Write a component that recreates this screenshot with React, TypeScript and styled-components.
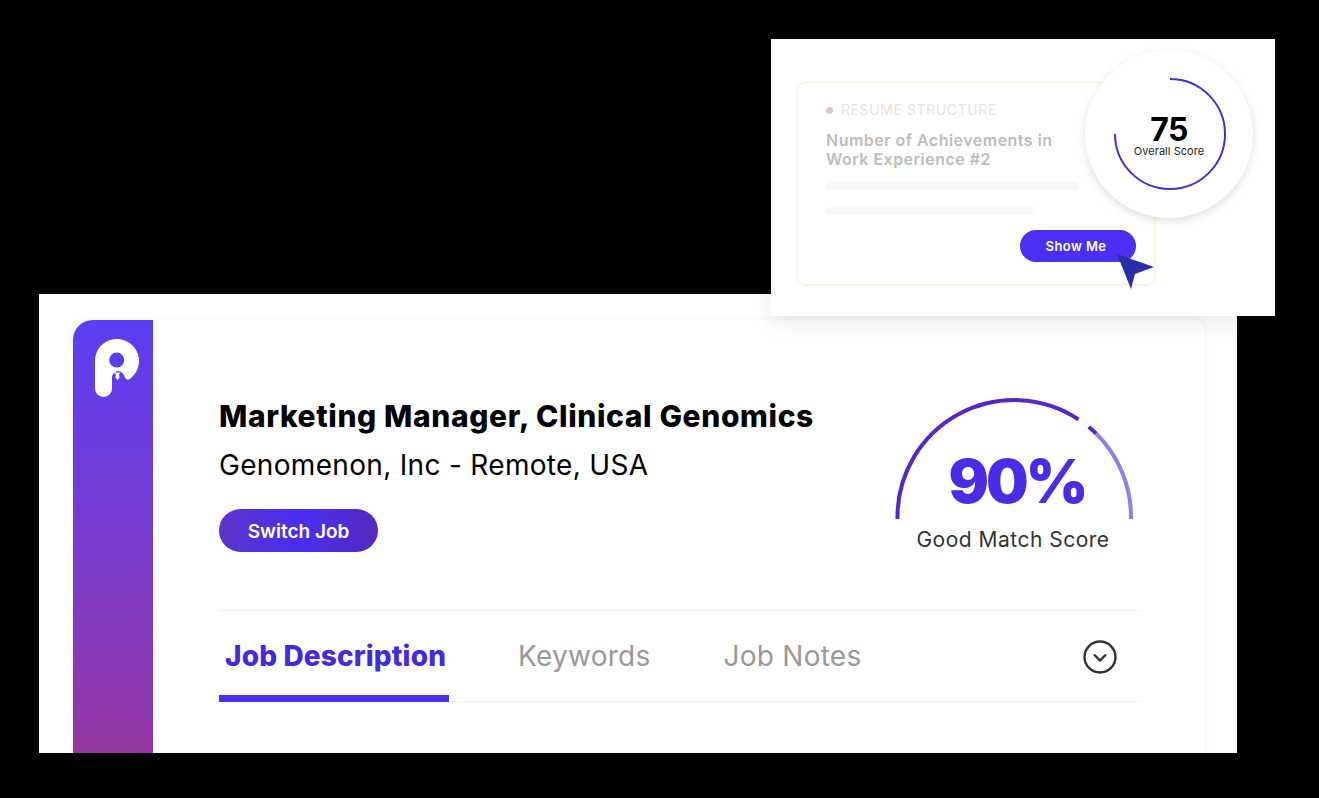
import React from "react";
import styled, { createGlobalStyle } from "styled-components";

const GlobalStyle = createGlobalStyle`
  html, body {
    margin: 0;
    padding: 0;
    background: #000;
  }
  body {
    font-family: Inter, "Noto Sans", sans-serif;
  }
`;

const App = () => {
  return (
    <Page>
      <GlobalStyle />
      <Panel>
        <Card>
          <Sidebar>
            <Logo />
          </Sidebar>
          <Content>
            <Header>
              <JobInfo>
                <JobTitle>Marketing Manager, Clinical Genomics</JobTitle>
                <Company>Genomenon, Inc - Remote, USA</Company>
                <SwitchButton>Switch Job</SwitchButton>
              </JobInfo>
              <Gauge>
                <GaugeArc />
                <GaugeValue>90%</GaugeValue>
                <GaugeLabel>Good Match Score</GaugeLabel>
              </Gauge>
            </Header>
            <Tabs>
              <Tab $active>Job Description</Tab>
              <Tab $left={69}>Keywords</Tab>
              <Tab $left={73}>Job Notes</Tab>
              <Chevron />
            </Tabs>
          </Content>
        </Card>
      </Panel>

      <ScorePopup>
        <ResumeCard>
          <Category>
            <Dot />
            RESUME STRUCTURE
          </Category>
          <Achievement>
            Number of Achievements in
            <br />
            Work Experience #2
          </Achievement>
          <GhostLine $width={253} />
          <GhostLine $width={209} />
          <ShowMe>Show Me</ShowMe>
          <Pointer />
        </ResumeCard>
        <ScoreBubble>
          <ScoreRing />
          <ScoreValue>75</ScoreValue>
          <ScoreLabel>Overall Score</ScoreLabel>
        </ScoreBubble>
      </ScorePopup>
    </Page>
  );
};

export default App;

const Logo = () => (
  <svg width="44" height="58" viewBox="0 0 44 58" style={{ display: "block" }}>
    <path
      d="M0 22A22 22 0 1 1 33 41L30 39C29.5 35 26 32 23.5 32C20 32 17 35 17 39V49.5A8.5 8.5 0 0 1 0 49.5Z"
      fill="#fff"
    />
    <circle cx="21.7" cy="21" r="7.5" fill="#5b3eee" />
    <path d="M18.5 33.5h7l-1.5 2 .6 3.2-2.1 2.4-2.1-2.4.6-3.2z" fill="#fff" />
  </svg>
);

const GaugeArc = () => (
  <svg width="240" height="124" viewBox="0 0 240 124" style={{ display: "block" }}>
    <path
      d="M4.5 122V119.75A116.75 116.75 0 0 1 185.5 22.3"
      fill="none"
      stroke="#5526c9"
      strokeWidth="4"
    />
    <path d="M195.8 30A116.75 116.75 0 0 1 203.2 36.6" fill="none" stroke="#4f27d0" strokeWidth="4" />
    <path
      d="M203.2 36.6A116.75 116.75 0 0 1 238 119.75V122"
      fill="none"
      stroke="#917ee8"
      strokeWidth="4"
    />
  </svg>
);

const Chevron = () => (
  <ChevronIcon width="34" height="34" viewBox="0 0 34 34">
    <circle cx="17" cy="17" r="15.5" fill="none" stroke="#333" strokeWidth="2.4" />
    <path d="M11 14.5l6 6 6-6" fill="none" stroke="#333" strokeWidth="2.4" />
  </ChevronIcon>
);

const ScoreRing = () => (
  <RingSvg width="114" height="114" viewBox="0 0 114 114">
    <path
      d="M57 2A55 55 0 1 1 2 57"
      fill="none"
      stroke="#4a2fcf"
      strokeWidth="2"
    />
  </RingSvg>
);

const Pointer = () => (
  <PointerSvg width="42" height="40" viewBox="0 0 42 40">
    <path d="M1 2L38 15L19 22L15 37z" fill="#2a2ea8" />
  </PointerSvg>
);

const Page = styled.div`
  position: relative;
  box-sizing: border-box;
  width: 1319px;
  height: 798px;
  padding: 294px 0 0 39px;
  background: #000;
  overflow: hidden;
`;

const Panel = styled.div`
  box-sizing: border-box;
  width: 1198px;
  height: 459px;
  padding: 26px 33px 0 34px;
  background: #fff;
  overflow: hidden;
`;

const Card = styled.div`
  display: flex;
  height: 460px;
  border-radius: 20px 8px 0 0;
  box-shadow: 0 0 10px rgba(0, 0, 0, 0.06);
`;

const Sidebar = styled.div`
  box-sizing: border-box;
  flex: 0 0 80px;
  padding: 19px 0 0 22px;
  border-radius: 20px 0 0 0;
  background: linear-gradient(180deg, #5b3ef2 0%, #7a3bcb 50%, #98359c 100%);
`;

const Content = styled.div`
  display: flex;
  flex-direction: column;
  width: 920px;
  margin-left: 66px;
`;

const Header = styled.div`
  box-sizing: border-box;
  display: flex;
  justify-content: space-between;
  height: 291px;
  padding: 78px 6px 0 0;
  border-bottom: 1px solid #f1f1f1;
`;

const JobInfo = styled.div`
  display: flex;
  flex-direction: column;
  align-items: flex-start;
`;

const JobTitle = styled.h1`
  margin: 0;
  font-size: 30px;
  line-height: 36px;
  font-weight: 800;
  letter-spacing: 0.62px;
  color: #000;
  white-space: nowrap;
`;

const Company = styled.div`
  margin-top: 13px;
  font-size: 28px;
  line-height: 36px;
  font-weight: 400;
  letter-spacing: 0.32px;
  color: #000;
  white-space: nowrap;
`;

const SwitchButton = styled.button`
  width: 159px;
  height: 43px;
  margin-top: 26px;
  padding: 2px 0 0;
  border: none;
  border-radius: 22px;
  background: linear-gradient(90deg, #5b34c6 0%, #4a2ef2 50%, #5529bd 100%);
  color: #fff;
  font-family: inherit;
  font-size: 19px;
  font-weight: 600;
`;

const Gauge = styled.div`
  position: relative;
  display: flex;
  flex-direction: column;
  align-items: center;
  width: 240px;
  margin-top: -1px;
`;

const GaugeValue = styled.div`
  position: absolute;
  top: 49px;
  left: 0;
  width: 240px;
  padding-left: 8px;
  box-sizing: border-box;
  text-align: center;
  font-size: 60px;
  line-height: 70px;
  font-weight: 900;
  letter-spacing: -3px;
  color: #4a2be6;
`;

const GaugeLabel = styled.div`
  margin-top: 3px;
  font-size: 21px;
  line-height: 32px;
  letter-spacing: 0.5px;
  color: #333;
  white-space: nowrap;
`;

const Tabs = styled.div`
  box-sizing: border-box;
  position: relative;
  display: flex;
  align-items: flex-start;
  height: 91px;
  border-bottom: 1px solid #f1f1f1;
`;

const Tab = styled.div<{ $active?: boolean; $left?: number }>`
  box-sizing: border-box;
  height: 91px;
  margin-left: ${(p) => p.$left ?? 0}px;
  padding: ${(p) => (p.$active ? "26px 3px 0 6px" : "26px 0 0")};
  border-bottom: ${(p) => (p.$active ? "7px solid #4b2ff0" : "none")};
  font-size: 28px;
  line-height: 38px;
  font-weight: ${(p) => (p.$active ? 800 : 400)};
  letter-spacing: ${(p) => (p.$active ? "0.14px" : "0.25px")};
  color: ${(p) => (p.$active ? "#4329e0" : "#999")};
  white-space: nowrap;
`;

const ChevronIcon = styled.svg`
  margin: 29px 22px 0 auto;
`;

const ScorePopup = styled.div`
  position: absolute;
  left: 771px;
  top: 39px;
  box-sizing: border-box;
  width: 504px;
  height: 277px;
  padding: 43px 0 0 26px;
  background: #fff;
  box-shadow: 0 8px 20px rgba(0, 0, 0, 0.08);
`;

const ResumeCard = styled.div`
  position: relative;
  box-sizing: border-box;
  width: 358px;
  height: 203px;
  padding: 17px 0 0 28px;
  border: 1px solid #f5efdd;
  border-radius: 8px;
  box-shadow: 0 1px 3px rgba(0, 0, 0, 0.05);
`;

const Category = styled.div`
  display: flex;
  align-items: center;
  gap: 8px;
  padding-top: 1px;
  font-size: 14px;
  line-height: 18px;
  letter-spacing: 0.6px;
  color: #e8e3e3;
`;

const Dot = styled.span`
  width: 7px;
  height: 7px;
  border-radius: 50%;
  background: #d9c6ce;
`;

const Achievement = styled.div`
  margin: 12px 0 13px;
  font-size: 16px;
  line-height: 19px;
  font-weight: 600;
  letter-spacing: 0.48px;
  color: #bdbdbd;
  white-space: nowrap;
`;

const GhostLine = styled.div<{ $width: number }>`
  width: ${(p) => p.$width}px;
  height: 8px;
  margin-bottom: 17px;
  border-radius: 4px;
  background: #f8f8f8;
`;

const ShowMe = styled.button`
  position: absolute;
  left: 222px;
  top: 147px;
  width: 116px;
  height: 32px;
  padding: 0 4px 0 0;
  border: none;
  border-radius: 16px;
  background: #4a2ff5;
  color: #fff;
  font-family: inherit;
  font-size: 13px;
  font-weight: 600;
  letter-spacing: 0.4px;
`;

const PointerSvg = styled.svg`
  position: absolute;
  left: 318px;
  top: 169px;
`;

const ScoreBubble = styled.div`
  position: absolute;
  left: 314px;
  top: 11px;
  display: flex;
  flex-direction: column;
  align-items: center;
  box-sizing: border-box;
  width: 168px;
  height: 168px;
  padding-top: 65px;
  border-radius: 50%;
  background: #fff;
  box-shadow: 0 3px 8px rgba(0, 0, 0, 0.13);
`;

const RingSvg = styled.svg`
  position: absolute;
  left: 28px;
  top: 27px;
`;

const ScoreValue = styled.div`
  font-size: 32px;
  line-height: 30px;
  font-weight: 700;
  letter-spacing: -0.5px;
  color: #000;
`;

const ScoreLabel = styled.div`
  font-size: 11px;
  line-height: 13px;
  letter-spacing: 0.05px;
  color: #222;
`;
